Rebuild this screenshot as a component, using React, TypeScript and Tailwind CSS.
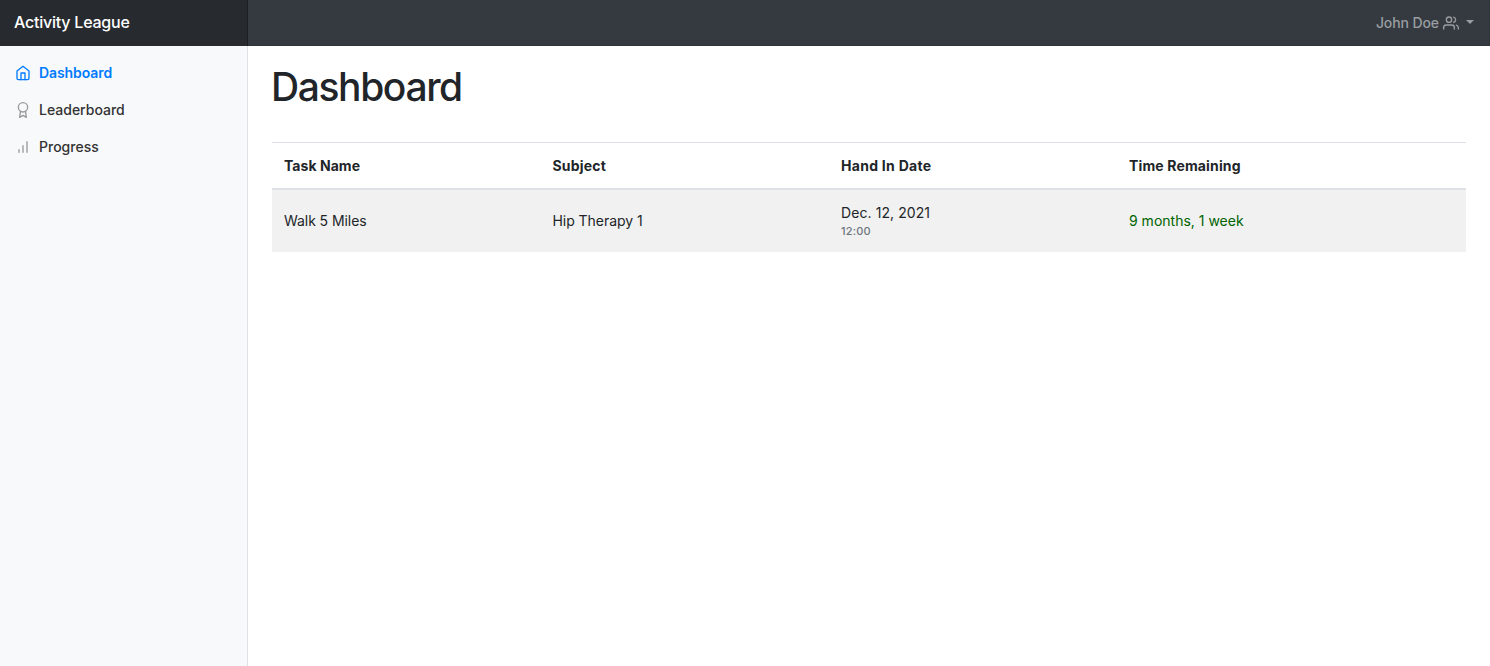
import React from 'react';

type Task = { name: string; subject: string; date: string; time: string; remaining: string };
const tasks: Task[] = [
  { name: 'Walk 5 Miles', subject: 'Hip Therapy 1', date: 'Dec. 12, 2021', time: '12:00', remaining: '9 months, 1 week' },
];

function Icon({ children, className }: { children: React.ReactNode; className: string }) {
  return (
    <svg viewBox="0 0 24 24" fill="none" stroke="currentColor" strokeWidth="2" strokeLinecap="round" strokeLinejoin="round" className={className}>
      {children}
    </svg>
  );
}

export default function App() {
  return (
    <div className="flex h-screen flex-col overflow-hidden bg-white font-['Inter',sans-serif] text-[14px] leading-[21.6px] text-[#212529]">
      <header className="flex h-[46px] shrink-0 border-r border-b border-[#2e3338] bg-[#343a40]">
        <div className="-mb-px flex w-[248px] items-center border-r border-[#1d2023] bg-[#272b30] pl-3.5 pb-0.5 text-base font-medium tracking-[-0.23px] text-white">
          <span>Activity League</span>
        </div>
        <div className="flex flex-1 items-center justify-end pr-[15px] pt-px font-medium text-[#9a9da0]">
          <span className="tracking-[-0.1px]">John Doe</span>
          <Icon className="ml-1 size-4">
            <path d="M17 21v-2a4 4 0 0 0-4-4H5a4 4 0 0 0-4 4v2" />
            <circle cx="9" cy="7" r="4" />
            <path d="M23 21v-2a4 4 0 0 0-3-3.87" />
            <path d="M16 3.13a4 4 0 0 1 0 7.75" />
          </Icon>
          <span className="mb-0.5 ml-[7px] border-x-4 border-t-4 border-x-transparent border-t-current" />
        </div>
      </header>
      <div className="flex min-h-0 flex-1">
        <nav className="w-[248px] shrink-0 border-r border-[#dee2e6] bg-[#f8f9fa] pt-2 font-medium">
          <a className="flex h-[37px] items-center pl-[15px] font-semibold tracking-[-0.08px] text-[#007bff]">
            <Icon className="mr-2 size-4">
              <path d="M3 9l9-7 9 7v11a2 2 0 0 1-2 2H5a2 2 0 0 1-2-2z" />
              <polyline points="9 22 9 12 15 12 15 22" />
            </Icon>
            <span>Dashboard</span>
          </a>
          <a className="flex h-[37px] items-center pl-[15px] text-[#333]">
            <Icon className="mr-2 size-4 text-[#999]">
              <circle cx="12" cy="8" r="7" />
              <polyline points="8.21 13.89 7 23 12 20 17 23 15.79 13.88" />
            </Icon>
            <span>Leaderboard</span>
          </a>
          <a className="flex h-[37px] items-center pl-[15px] text-[#333]">
            <Icon className="mr-2 size-4 text-[#999]">
              <path d="M18 20V4M12 20V10M6 20v-4" />
            </Icon>
            <span>Progress</span>
          </a>
        </nav>
        <main className="flex-1 px-6 pt-[17px]">
          <h1 className="-ml-px text-[39px] leading-[48px] font-[550] tracking-[-1.4px]">Dashboard</h1>
          <table className="mt-[31px] w-full table-fixed border-collapse text-left">
            <colgroup>
              <col className="w-[268.5px]" />
              <col className="w-[288.5px]" />
              <col className="w-[288px]" />
              <col />
            </colgroup>
            <thead>
              <tr className="h-[46.5px] border-t border-b-2 border-[#dee2e6]">
                <th className="px-3 font-bold tracking-[0.05px]">Task Name</th>
                <th className="px-3 font-bold tracking-[0.2px]">Subject</th>
                <th className="px-3 font-bold tracking-[0.28px]">Hand In Date</th>
                <th className="px-3 font-bold tracking-[0.14px]">Time Remaining</th>
              </tr>
            </thead>
            <tbody>
              {tasks.map((t) => (
                <tr key={t.name} className="h-[62.5px] bg-[#f1f1f1]">
                  <td className="px-3 tracking-[-0.07px]">{t.name}</td>
                  <td className="px-3 tracking-[-0.05px]">{t.subject}</td>
                  <td className="px-3">
                    <div className="leading-[21px] tracking-[0.08px]">{t.date}</div>
                    <div className="text-[11px] leading-[16px] font-medium tracking-[0.2px] text-[#6c757d]">{t.time}</div>
                  </td>
                  <td className="px-3 text-[#006400]">{t.remaining}</td>
                </tr>
              ))}
            </tbody>
          </table>
        </main>
      </div>
    </div>
  );
}
